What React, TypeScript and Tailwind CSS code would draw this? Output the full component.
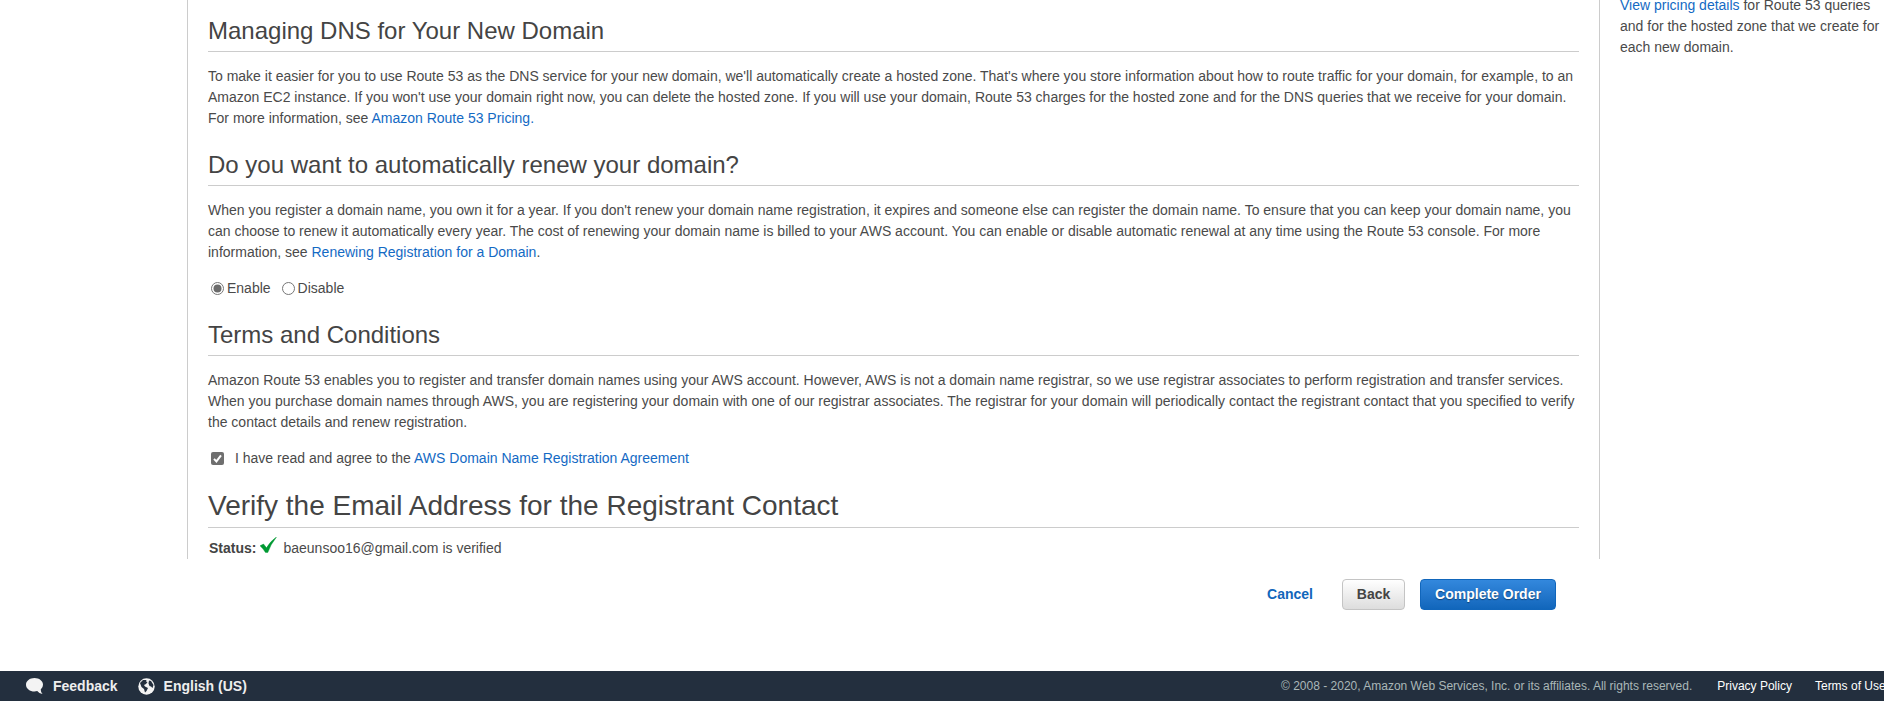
import type { ReactNode } from "react";

const Link = ({ children }: { children: ReactNode }) => (
  <a href="#" className="text-[#146ac4]">{children}</a>
);

const Heading = ({ children }: { children: ReactNode }) => (
  <h2 className="h-[38px] border-b border-[#cccccc] text-[24px] leading-[33px] text-[#444444]">{children}</h2>
);

function Radio({ label, checked }: { label: string; checked?: boolean }) {
  return (
    <label className="flex items-center gap-[3px]">
      <svg width="13" height="13" viewBox="0 0 13 13">
        <circle cx="6.5" cy="6.5" r="6" fill="#fff" stroke="#767676" />
        {checked && <circle cx="6.5" cy="6.5" r="4" fill="#6b6b6b" />}
      </svg>
      <span>{label}</span>
    </label>
  );
}

export default function App() {
  return (
    <div className="flex h-[701px] w-[1884px] flex-col overflow-hidden bg-white font-['Liberation_Sans',Arial,sans-serif] text-[14px] leading-[21px] text-[#4a4a4a]">
      <div className="flex h-[559px] pl-[187px]">
        <main className="w-[1413px] border-x border-[#cccccc] pl-5 pr-5 pt-[14px] whitespace-nowrap">
          <Heading>Managing DNS for Your New Domain</Heading>
          <p className="mt-[14px]">
            To make it easier for you to use Route 53 as the DNS service for your new domain, we'll automatically create a hosted zone. That's where you store information about how to route traffic for your domain, for example, to an<br />
            Amazon EC2 instance. If you won't use your domain right now, you can delete the hosted zone. If you will use your domain, Route 53 charges for the hosted zone and for the DNS queries that we receive for your domain.<br />
            For more information, see <Link>Amazon Route 53 Pricing.</Link>
          </p>
          <div className="mt-[19px]"><Heading>Do you want to automatically renew your domain?</Heading></div>
          <p className="mt-[14px]">
            When you register a domain name, you own it for a year. If you don't renew your domain name registration, it expires and someone else can register the domain name. To ensure that you can keep your domain name, you<br />
            can choose to renew it automatically every year. The cost of renewing your domain name is billed to your AWS account. You can enable or disable automatic renewal at any time using the Route 53 console. For more<br />
            information, see <Link>Renewing Registration for a Domain</Link>.
          </p>
          <div className="mt-[15px] flex gap-[11px] pl-[3px]">
            <Radio label="Enable" checked />
            <Radio label="Disable" />
          </div>
          <div className="mt-[19px]"><Heading>Terms and Conditions</Heading></div>
          <p className="mt-[14px]">
            Amazon Route 53 enables you to register and transfer domain names using your AWS account. However, AWS is not a domain name registrar, so we use registrar associates to perform registration and transfer services.<br />
            When you purchase domain names through AWS, you are registering your domain with one of our registrar associates. The registrar for your domain will periodically contact the registrant contact that you specified to verify<br />
            the contact details and renew registration.
          </p>
          <label className="mt-[15px] flex items-center pl-[3px]">
            <svg width="13" height="13" viewBox="0 0 13 13">
              <rect width="13" height="13" rx="2" fill="#6f6f6f" />
              <path d="M3 6.9 5.4 9.4 10 3.4" fill="none" stroke="#fff" strokeWidth="2" />
            </svg>
            <span className="ml-[11px]">I have read and agree to the <Link>AWS Domain Name Registration Agreement</Link></span>
          </label>
          <h1 className="mt-[19px] h-[40px] border-b border-[#cccccc] text-[28px] leading-[36px] text-[#444444]">Verify the Email Address for the Registrant Contact</h1>
          <div className="flex pl-px pt-[10px]">
            <b className="text-[#444444]">Status:</b>
            <svg className="-mt-px ml-[4px]" width="17" height="17" viewBox="0 0 17 17">
              <path d="M0 8.800 3.500 7 6.500 10.800Q10.500 4 16.500 0 10.500 7.500 7.800 15.500H5.500Q3 11.500 0 8.800Z" fill="#009933" stroke="#009933" strokeWidth=".4" />
            </svg>
            <span className="ml-[6px]">baeunsoo16@gmail.com is verified</span>
          </div>
        </main>
        <aside className="-mt-[5px] pl-5 whitespace-nowrap">
          <Link>View pricing details</Link> for Route 53 queries<br />
          and for the hosted zone that we create for<br />
          each new domain.
        </aside>
      </div>
      <div className="mt-5 flex h-[31px] justify-end pr-[328px] font-bold">
        <button className="mr-[29px] text-[#1166bb]">Cancel</button>
        <button className="mr-[15px] w-[63px] rounded-[4px] border border-[#c4c4c4] bg-linear-to-b from-white to-[#dddddd] text-[#444444]">Back</button>
        <button className="w-[136px] rounded-[4px] border border-[#1166bb] bg-linear-to-b from-[#3388dd] to-[#1166bb] text-white [text-shadow:0_1px_1px_#114477]">Complete Order</button>
      </div>
      <footer className="mt-auto flex h-[30px] items-center bg-[#232f3e] pl-[26px] text-[14px] font-bold whitespace-nowrap text-[#eeeeee]">
        <svg width="18" height="17" viewBox="0 0 18 17">
          <path d="M8.500 0C3.800 0 0 2.900 0 6.700s3.800 6.800 8.500 6.800q1.500 0 2.700-.4Q13 15.500 16.500 16 14.700 14 14.700 11.600 17 9.700 17 6.700C17 2.900 13.200 0 8.500 0Z" fill="#f3f3f3" />
        </svg>
        <span className="ml-[9px]">Feedback</span>
        <svg className="ml-5" width="17" height="17" viewBox="0 0 17 17">
          <circle cx="8.500" cy="8.500" r="8.200" fill="#f3f3f3" />
          <path d="M2 5 5 2 8.500 2 8 3.500 9.500 4 8 6 6 7 7 8.500 10 10 8.500 13 7 14.500 6 11 3.500 9ZM11 2.500 13 3 15.500 7 14.500 10 13 8.500 11.500 8 10.500 5.500Z" fill="#232f3e" />
        </svg>
        <span className="ml-[9px]">English (US)</span>
        <div className="ml-auto flex w-[603px] text-[12px] font-normal">
          <span className="text-[#aab7b8]">© 2008 - 2020, Amazon Web Services, Inc. or its affiliates. All rights reserved.</span>
          <span className="ml-[25px] text-white">Privacy Policy</span>
          <span className="ml-[23px] text-white">Terms of Use</span>
        </div>
      </footer>
    </div>
  );
}
